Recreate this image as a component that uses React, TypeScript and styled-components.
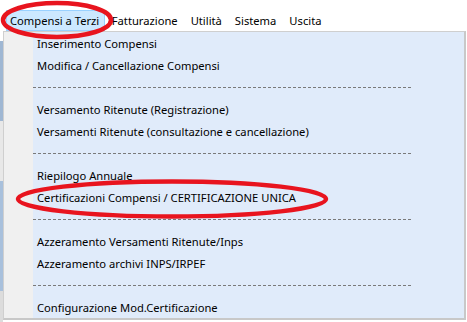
import React from "react";
import styled, { createGlobalStyle } from "styled-components";

const Global = createGlobalStyle`
  html, body { margin: 0; padding: 0; background: #ffffff; }
  body { font-family: "Noto Sans", "Open Sans", sans-serif; font-size: 11.2px; color: #000; }
`;

const Page = styled.div`
  position: relative;
  width: 467px;
  height: 322px;
  overflow: hidden;
  background: #ffffff;
`;

const MenuBar = styled.div`
  display: flex;
  align-items: center;
  height: 31px;
  padding: 9px 0 0 6px;
  box-sizing: border-box;
`;

const TopItem = styled.div<{ $active?: boolean }>`
  height: 21px;
  display: flex;
  align-items: center;
  padding: ${(p) => (p.$active ? "0 5px 0 3px" : "0 6.5px")};
  box-sizing: border-box;
  background: ${(p) => (p.$active ? "#cce8ff" : "transparent")};
  border: ${(p) => (p.$active ? "1px solid #99d1ff" : "none")};
  white-space: nowrap;
`;

const Body = styled.div`
  display: flex;
  height: 291px;
`;

const BackStrip = styled.div`
  width: 3px;
  background: linear-gradient(
    to bottom,
    #ffffff 0px, #ffffff 10px,
    #9fb7d3 10px, #9fb7d3 90px,
    #e8e8e8 90px, #e8e8e8 150px,
    #a8c0dc 150px, #a8c0dc 260px,
    #dcdcdc 260px
  );
`;

const Dropdown = styled.div`
  display: flex;
  width: 463px;
  height: 289px;
  border: 1px solid #cfcfcf;
  border-right: 2px solid #c8c8c8;
  border-bottom: 2px solid #c8c8c8;
  box-sizing: border-box;
  background: #f0f0f0;
`;

const Gutter = styled.div`
  width: 29px;
  background: #f0f0f0;
`;

const List = styled.div`
  flex: 1;
  background: #e0ebfa;
  padding-top: 1px;
  display: flex;
  flex-direction: column;
`;

const Item = styled.div`
  height: 22px;
  display: flex;
  align-items: center;
  padding-left: 4px;
  white-space: nowrap;
`;

const SepRow = styled.div`
  height: 22px;
  display: flex;
  align-items: center;
`;

const Dash = styled.div`
  width: 378px;
  height: 1px;
  background: repeating-linear-gradient(to right, #7a7a7a 0px, #7a7a7a 3px, transparent 3px, transparent 5px);
`;

const Overlay = styled.svg`
  position: absolute;
  left: 0;
  top: 0;
  pointer-events: none;
`;

const rows: (string | null)[] = [
  "Inserimento Compensi",
  "Modifica / Cancellazione Compensi",
  null,
  "Versamento Ritenute (Registrazione)",
  "Versamenti Ritenute (consultazione e cancellazione)",
  null,
  "Riepilogo Annuale",
  "Certificazioni Compensi / CERTIFICAZIONE UNICA",
  null,
  "Azzeramento Versamenti Ritenute/Inps",
  "Azzeramento archivi INPS/IRPEF",
  null,
  "Configurazione Mod.Certificazione",
];

export default function App() {
  return (
    <>
      <Global />
      <Page>
        <MenuBar>
          <TopItem $active>Compensi a Terzi</TopItem>
          <TopItem>Fatturazione</TopItem>
          <TopItem>Utilità</TopItem>
          <TopItem>Sistema</TopItem>
          <TopItem>Uscita</TopItem>
        </MenuBar>
        <Body>
          <BackStrip />
          <Dropdown>
            <Gutter />
            <List>
              {rows.map((r, i) =>
                r === null ? (
                  <SepRow key={i}>
                    <Dash />
                  </SepRow>
                ) : (
                  <Item key={i}>{r}</Item>
                )
              )}
            </List>
          </Dropdown>
        </Body>
        <Overlay width="467" height="322" viewBox="0 0 467 322">
          <ellipse cx="57" cy="20" rx="54" ry="17" fill="none" stroke="#e8141e" strokeWidth="4.5" />
          <ellipse cx="172" cy="199" rx="154" ry="17.5" fill="none" stroke="#e8141e" strokeWidth="4.5" />
        </Overlay>
      </Page>
    </>
  );
}
